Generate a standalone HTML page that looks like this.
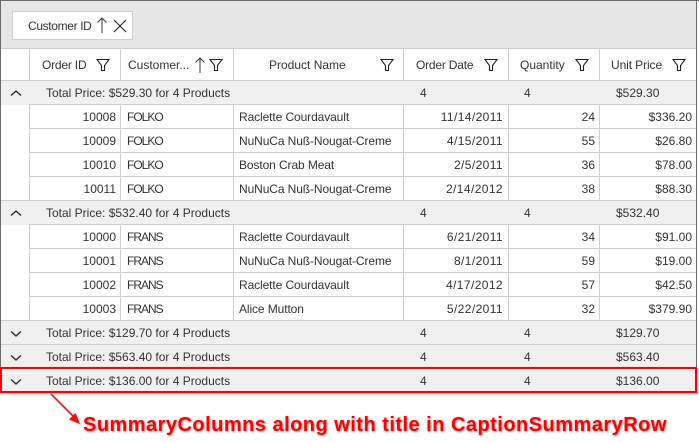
<!DOCTYPE html>
<html>
<head>
<meta charset="utf-8">
<style>
html,body{margin:0;padding:0;background:#fff;}
body{width:699px;height:443px;position:relative;overflow:hidden;font-family:"Liberation Sans",sans-serif;font-size:12px;color:#333;}
.a{position:absolute;}
.t{position:absolute;white-space:nowrap;line-height:24px;height:24px;margin-top:1px;}
.r{position:absolute;left:1px;width:696px;height:24px;}
.c{background:#f0f0f0;}
.hl{position:absolute;background:#cfcfcf;}
.id{left:30px;width:86px;text-align:right;}
.cu{left:127px;letter-spacing:-1px;}
.pn{left:239px;letter-spacing:-.1px;}
.dt{left:404px;width:99px;text-align:right;letter-spacing:.4px;}
.qt{left:509px;width:86px;text-align:right;}
.up{left:600px;width:92px;text-align:right;}
.h{line-height:31px;height:31px;top:49px;}
</style>
</head>
<body>
<!-- outer -->
<div class="a" style="left:0;top:0;width:699px;height:1px;background:#6b6b6b"></div>
<div class="a" style="left:0;top:0;width:1px;height:393px;background:#6b6b6b"></div>
<div class="a" style="left:696px;top:0;width:1px;height:393px;background:#6b6b6b"></div>
<!-- group area -->
<div class="a" style="left:1px;top:1px;width:695px;height:47px;background:#e6e6e6"></div>
<div class="a" style="left:12px;top:11px;width:119px;height:27px;background:#fff;border:1px solid #cfcfcf"></div>
<div class="t" style="left:28px;top:13px;letter-spacing:-.35px">Customer ID</div>
<svg class="a" style="left:96px;top:16px" width="12" height="18" viewBox="0 0 12 18"><path d="M6 17V2M1.500 6.500L6 2l4.500 4.500" fill="none" stroke="#3a3a3a" stroke-width="1"/></svg>
<svg class="a" style="left:113px;top:19px" width="14" height="14" viewBox="0 0 14 14"><path d="M1 1l12 12M13 1L1 13" fill="none" stroke="#222" stroke-width="1.100"/></svg>

<!-- header -->
<div class="hl" style="left:1px;top:48px;width:695px;height:1px"></div>
<div class="hl" style="left:1px;top:80px;width:695px;height:1px"></div>
<div class="t h" style="left:42px;letter-spacing:-.2px">Order ID</div>
<div class="t h" style="left:128px">Customer...</div>
<div class="t h" style="left:269px">Product Name</div>
<div class="t h" style="left:416px;letter-spacing:-.2px">Order Date</div>
<div class="t h" style="left:520px">Quantity</div>
<div class="t h" style="left:611px;letter-spacing:-.1px">Unit Price</div>
<svg class="a" style="left:194px;top:56px" width="12" height="18" viewBox="0 0 12 18"><path d="M6 17V2M1.500 6.500L6 2l4.500 4.500" fill="none" stroke="#3a3a3a" stroke-width="1"/></svg>
<svg width="0" height="0" style="position:absolute"><defs><symbol id="f" viewBox="0 0 14 14"><path d="M1 1.500H13L8.500 7.500V12.500H5.500V7.500Z" fill="none" stroke="#222" stroke-width="1.100"/></symbol></defs></svg>
<svg class="a" style="left:96px;top:58px" width="14" height="14"><use href="#f"/></svg>
<svg class="a" style="left:209px;top:58px" width="14" height="14"><use href="#f"/></svg>
<svg class="a" style="left:380px;top:58px" width="14" height="14"><use href="#f"/></svg>
<svg class="a" style="left:484px;top:58px" width="14" height="14"><use href="#f"/></svg>
<svg class="a" style="left:575px;top:58px" width="14" height="14"><use href="#f"/></svg>
<svg class="a" style="left:672px;top:58px" width="14" height="14"><use href="#f"/></svg>

<!-- caption rows -->
<div class="r c" style="top:81px;width:695px"></div>
<div class="r c" style="top:201px;width:695px"></div>
<div class="r c" style="top:321px;width:695px"></div>
<div class="r c" style="top:345px;width:695px"></div>
<div class="r c" style="top:369px;width:695px"></div>

<!-- horizontal lines -->
<div class="hl" style="left:1px;top:200px;width:695px;height:1px"></div>
<div class="hl" style="left:1px;top:320px;width:695px;height:1px"></div>
<div class="hl" style="left:1px;top:344px;width:695px;height:1px"></div>
<div class="hl" style="left:29px;top:104px;width:667px;height:1px"></div>
<div class="hl" style="left:29px;top:128px;width:667px;height:1px"></div>
<div class="hl" style="left:29px;top:152px;width:667px;height:1px"></div>
<div class="hl" style="left:29px;top:176px;width:667px;height:1px"></div>
<div class="hl" style="left:29px;top:224px;width:667px;height:1px"></div>
<div class="hl" style="left:29px;top:248px;width:667px;height:1px"></div>
<div class="hl" style="left:29px;top:272px;width:667px;height:1px"></div>
<div class="hl" style="left:29px;top:296px;width:667px;height:1px"></div>

<!-- vertical lines: header -->
<div class="hl" style="left:29px;top:49px;width:1px;height:31px"></div>
<div class="hl" style="left:120px;top:49px;width:1px;height:31px"></div>
<div class="hl" style="left:233px;top:49px;width:1px;height:31px"></div>
<div class="hl" style="left:403px;top:49px;width:1px;height:31px"></div>
<div class="hl" style="left:508px;top:49px;width:1px;height:31px"></div>
<div class="hl" style="left:599px;top:49px;width:1px;height:31px"></div>
<!-- vertical lines: group 1 -->
<div class="hl" style="left:29px;top:105px;width:1px;height:95px"></div>
<div class="hl" style="left:120px;top:105px;width:1px;height:95px"></div>
<div class="hl" style="left:233px;top:105px;width:1px;height:95px"></div>
<div class="hl" style="left:403px;top:105px;width:1px;height:95px"></div>
<div class="hl" style="left:508px;top:105px;width:1px;height:95px"></div>
<div class="hl" style="left:599px;top:105px;width:1px;height:95px"></div>
<!-- vertical lines: group 2 -->
<div class="hl" style="left:29px;top:225px;width:1px;height:95px"></div>
<div class="hl" style="left:120px;top:225px;width:1px;height:95px"></div>
<div class="hl" style="left:233px;top:225px;width:1px;height:95px"></div>
<div class="hl" style="left:403px;top:225px;width:1px;height:95px"></div>
<div class="hl" style="left:508px;top:225px;width:1px;height:95px"></div>
<div class="hl" style="left:599px;top:225px;width:1px;height:95px"></div>

<!-- chevrons -->
<svg class="a" style="left:10px;top:89px" width="12" height="8" viewBox="0 0 12 8"><path d="M1 6.500L6 2l5 4.500" fill="none" stroke="#222" stroke-width="1.300"/></svg>
<svg class="a" style="left:10px;top:209px" width="12" height="8" viewBox="0 0 12 8"><path d="M1 6.500L6 2l5 4.500" fill="none" stroke="#222" stroke-width="1.300"/></svg>
<svg class="a" style="left:10px;top:330px" width="12" height="8" viewBox="0 0 12 8"><path d="M1 1.500L6 6l5-4.500" fill="none" stroke="#222" stroke-width="1.300"/></svg>
<svg class="a" style="left:10px;top:354px" width="12" height="8" viewBox="0 0 12 8"><path d="M1 1.500L6 6l5-4.500" fill="none" stroke="#222" stroke-width="1.300"/></svg>
<svg class="a" style="left:10px;top:378px" width="12" height="8" viewBox="0 0 12 8"><path d="M1 1.500L6 6l5-4.500" fill="none" stroke="#222" stroke-width="1.300"/></svg>

<!-- caption text -->
<div class="t" style="left:46px;top:80px">Total Price: $529.30 for 4 Products</div><div class="t" style="left:420px;top:80px">4</div><div class="t" style="left:524px;top:80px">4</div><div class="t" style="left:616px;top:80px">$529.30</div>
<div class="t" style="left:46px;top:200px">Total Price: $532.40 for 4 Products</div><div class="t" style="left:420px;top:200px">4</div><div class="t" style="left:524px;top:200px">4</div><div class="t" style="left:616px;top:200px">$532.40</div>
<div class="t" style="left:46px;top:320px">Total Price: $129.70 for 4 Products</div><div class="t" style="left:420px;top:320px">4</div><div class="t" style="left:524px;top:320px">4</div><div class="t" style="left:616px;top:320px">$129.70</div>
<div class="t" style="left:46px;top:344px">Total Price: $563.40 for 4 Products</div><div class="t" style="left:420px;top:344px">4</div><div class="t" style="left:524px;top:344px">4</div><div class="t" style="left:616px;top:344px">$563.40</div>
<div class="t" style="left:46px;top:368px">Total Price: $136.00 for 4 Products</div><div class="t" style="left:420px;top:368px">4</div><div class="t" style="left:524px;top:368px">4</div><div class="t" style="left:616px;top:368px">$136.00</div>

<!-- data rows -->
<div class="t id" style="top:104px">10008</div><div class="t cu" style="top:104px">FOLKO</div><div class="t pn" style="top:104px">Raclette Courdavault</div><div class="t dt" style="top:104px">11/14/2011</div><div class="t qt" style="top:104px">24</div><div class="t up" style="top:104px">$336.20</div>
<div class="t id" style="top:128px">10009</div><div class="t cu" style="top:128px">FOLKO</div><div class="t pn" style="top:128px">NuNuCa Nuß-Nougat-Creme</div><div class="t dt" style="top:128px">4/15/2011</div><div class="t qt" style="top:128px">55</div><div class="t up" style="top:128px">$26.80</div>
<div class="t id" style="top:152px">10010</div><div class="t cu" style="top:152px">FOLKO</div><div class="t pn" style="top:152px">Boston Crab Meat</div><div class="t dt" style="top:152px">2/5/2011</div><div class="t qt" style="top:152px">36</div><div class="t up" style="top:152px">$78.00</div>
<div class="t id" style="top:176px">10011</div><div class="t cu" style="top:176px">FOLKO</div><div class="t pn" style="top:176px">NuNuCa Nuß-Nougat-Creme</div><div class="t dt" style="top:176px">2/14/2012</div><div class="t qt" style="top:176px">38</div><div class="t up" style="top:176px">$88.30</div>

<div class="t id" style="top:224px">10000</div><div class="t cu" style="top:224px">FRANS</div><div class="t pn" style="top:224px">Raclette Courdavault</div><div class="t dt" style="top:224px">6/21/2011</div><div class="t qt" style="top:224px">34</div><div class="t up" style="top:224px">$91.00</div>
<div class="t id" style="top:248px">10001</div><div class="t cu" style="top:248px">FRANS</div><div class="t pn" style="top:248px">NuNuCa Nuß-Nougat-Creme</div><div class="t dt" style="top:248px">8/1/2011</div><div class="t qt" style="top:248px">59</div><div class="t up" style="top:248px">$19.00</div>
<div class="t id" style="top:272px">10002</div><div class="t cu" style="top:272px">FRANS</div><div class="t pn" style="top:272px">Raclette Courdavault</div><div class="t dt" style="top:272px">4/17/2012</div><div class="t qt" style="top:272px">57</div><div class="t up" style="top:272px">$42.50</div>
<div class="t id" style="top:296px">10003</div><div class="t cu" style="top:296px">FRANS</div><div class="t pn" style="top:296px">Alice Mutton</div><div class="t dt" style="top:296px">5/22/2011</div><div class="t qt" style="top:296px">32</div><div class="t up" style="top:296px">$379.90</div>

<!-- highlight -->
<div class="a" style="left:0;top:367px;width:693px;height:22px;border:2px solid #f00;box-shadow:1px 1px 2px rgba(0,0,0,.35)"></div>

<!-- arrow -->
<svg class="a" style="left:48px;top:392px;filter:drop-shadow(1px 1px 1px rgba(0,0,0,.3))" width="36" height="36" viewBox="0 0 36 36"><path d="M3 2L28 27" stroke="#e11" stroke-width="1.500" fill="none"/><path d="M32 32L21 27.500L27.500 21Z" fill="#e11"/></svg>

<!-- annotation -->
<div class="a" style="left:83px;top:412px;line-height:26px;white-space:nowrap;font-size:20px;font-weight:bold;letter-spacing:.48px;color:#f00;text-shadow:1px 1px 2px rgba(0,0,0,.45)">SummaryColumns along with title in CaptionSummaryRow</div>
</body>
</html>
